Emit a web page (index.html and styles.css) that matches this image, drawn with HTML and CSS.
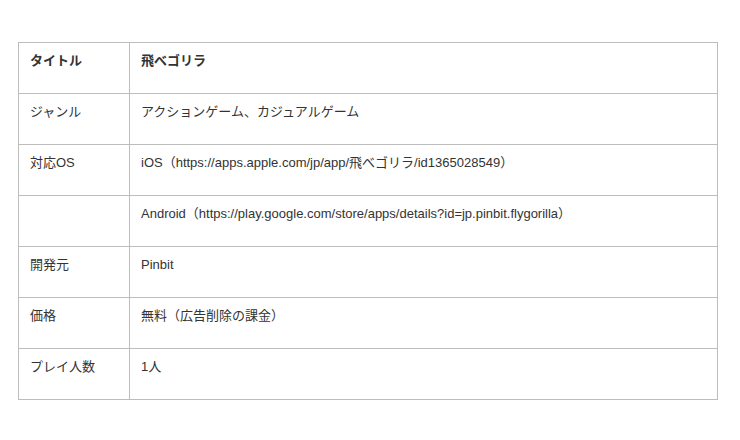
FILE: index.html
```html
<!DOCTYPE html>
<html lang="ja">
<head>
<meta charset="utf-8">
<link rel="stylesheet" href="styles.css">
</head>
<body>
<div class="page">
<table class="info">
  <tr><th class="label strong">タイトル</th><td class="value strong">飛べゴリラ</td></tr>
  <tr><th class="label">ジャンル</th><td class="value">アクションゲーム、カジュアルゲーム</td></tr>
  <tr><th class="label">対応OS</th><td class="value">iOS（https://apps.apple.com/jp/app/飛べゴリラ/id1365028549）</td></tr>
  <tr><th class="label"></th><td class="value">Android（https://play.google.com/store/apps/details?id=jp.pinbit.flygorilla）</td></tr>
  <tr><th class="label">開発元</th><td class="value">Pinbit</td></tr>
  <tr><th class="label">価格</th><td class="value">無料（広告削除の課金）</td></tr>
  <tr><th class="label">プレイ人数</th><td class="value">1人</td></tr>
</table>
</div>
</body>
</html>
```
FILE: styles.css
```css
html, body { margin: 0; padding: 0; background: #fff; }
.page { padding: 42px 18px; }
.info {
  border-collapse: collapse;
  width: 700px;
  font-family: "Liberation Sans", Arial, "Noto Sans CJK JP", sans-serif;
  font-size: 13px;
  color: #333;
}
.info th, .info td {
  border: 1px solid #bdbdbd;
  padding: 10px 11px 24px;
  line-height: 16px;
  height: 16px;
  text-align: left;
  vertical-align: top;
  font-weight: normal;
}
.info .label { width: 88px; }
.info .strong { font-weight: bold; }
```
